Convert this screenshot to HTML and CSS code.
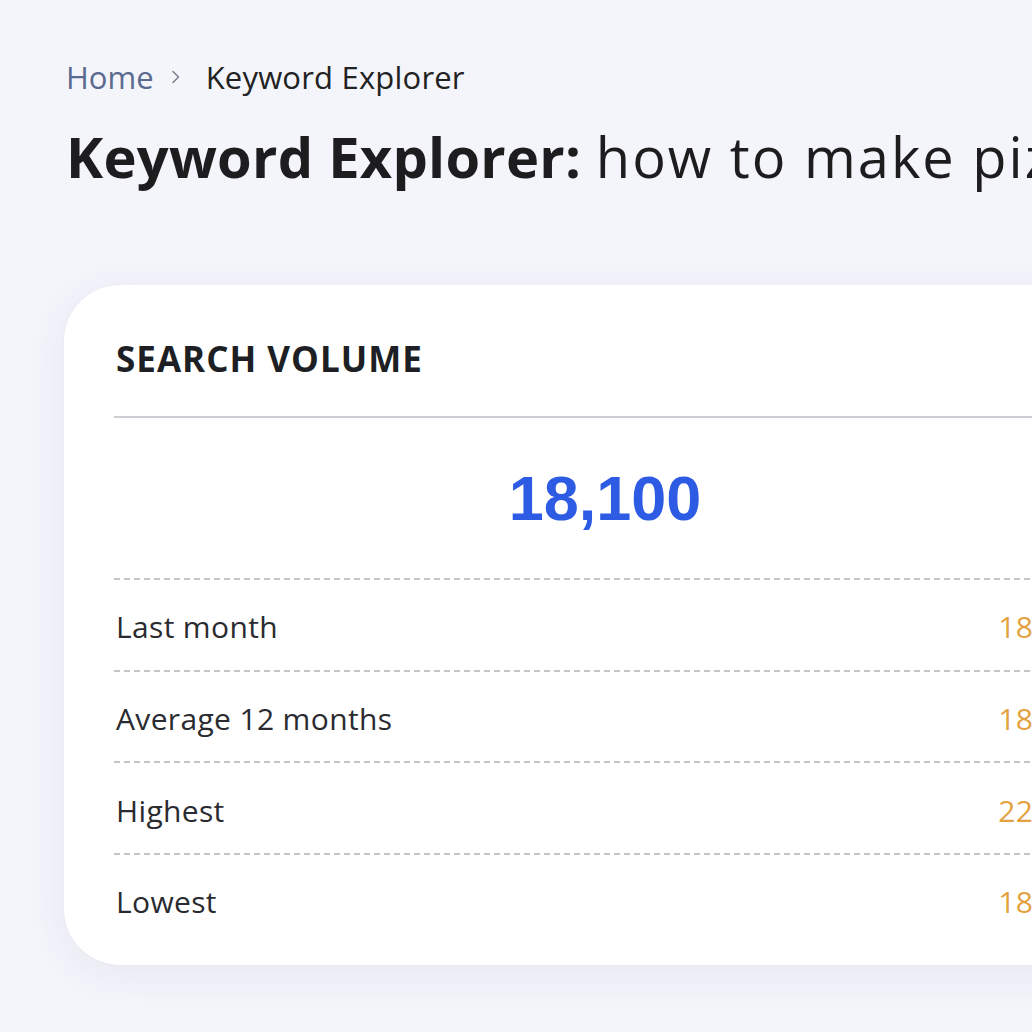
FILE: index.html
```html
<!DOCTYPE html>
<html lang="en">
<head>
<meta charset="utf-8">
<title>Keyword Explorer</title>
<link rel="stylesheet" href="styles.css">
</head>
<body>
<div class="page">
  <nav class="crumbs">
    <a class="crumb-home" href="#">Home</a>
    <svg class="crumb-sep" viewBox="0 0 10 16" width="10" height="16" aria-hidden="true"><path d="M2 2.5 L7.5 8 L2 13.5" fill="none" stroke="#7a7f8c" stroke-width="1.5" stroke-linecap="round" stroke-linejoin="round"/></svg>
    <span class="crumb-current">Keyword Explorer</span>
  </nav>
  <h1 class="title"><strong>Keyword Explorer:</strong> <span class="query">how to make pizza</span></h1>

  <section class="card">
    <h2 class="card-head">SEARCH VOLUME</h2>
    <div class="big-number">18,100</div>
    <div class="row"><span class="label">Last month</span><span class="value">18,100</span></div>
    <div class="row"><span class="label">Average 12 months</span><span class="value">18,100</span></div>
    <div class="row"><span class="label">Highest</span><span class="value">22,200</span></div>
    <div class="row"><span class="label">Lowest</span><span class="value">18,100</span></div>
  </section>
</div>
</body>
</html>
```

FILE: styles.css
```css
html, body {
  margin: 0;
  padding: 0;
}
body {
  background: #f4f5fb;
  overflow: hidden;
  font-family: "Open Sans", "Noto Sans", sans-serif;
  color: #222;
  width: 1032px;
  height: 1032px;
}
.page {
  width: 1300px;
  padding: 55px 0 0 66px;
  box-sizing: border-box;
}
.crumbs {
  display: flex;
  align-items: center;
  font-size: 31px;
  line-height: 44px;
}
.crumb-home {
  color: #5b6a8f;
  text-decoration: none;
}
.crumb-sep {
  width: 10px;
  height: 16px;
  margin: 0 25px 0 17px;
}
.crumb-current {
  color: #222;
  letter-spacing: 0.2px;
}
.title {
  margin: 22px 0 0 0;
  font-size: 56px;
  line-height: 70px;
  font-weight: 400;
  color: #1d1d1f;
  white-space: nowrap;
}
.title strong {
  font-weight: 700;
  letter-spacing: 0.25px;
}
.query {
  letter-spacing: 2px;
}
.card {
  margin: 94px 0 0 -2px;
  width: 1082px;
  box-sizing: border-box;
  background: #fff;
  border-radius: 56px;
  box-shadow: 0 8px 40px rgba(60, 70, 120, 0.08), 0 0 2px rgba(60, 70, 120, 0.06);
  padding: 42px 50px 20px 50px;
}
.card-head {
  margin: 0;
  font-size: 35px;
  line-height: 60px;
  font-weight: 700;
  letter-spacing: 1px;
  color: #1d1f24;
  padding: 2px 0 27px 2px;
  border-bottom: 2px solid #cdced3;
}
.big-number {
  font-family: "Liberation Sans", Arial, sans-serif;
  font-weight: 700;
  font-size: 63px;
  color: #2d5be3;
  text-align: center;
  height: 160px;
  line-height: 160px;
}
.row {
  display: flex;
  justify-content: space-between;
  align-items: center;
  box-sizing: border-box;
  height: 91.7px;
  padding: 6px 2px 0 2px;
  background-image: repeating-linear-gradient(to right, #c4c5ca 0 6px, transparent 6px 10px);
  background-size: 100% 2px;
  background-repeat: no-repeat;
  background-position: top left;
  font-size: 30px;
  letter-spacing: 0.35px;
  color: #2a2b30;
}
.value {
  color: #e3a23f;
}
```
